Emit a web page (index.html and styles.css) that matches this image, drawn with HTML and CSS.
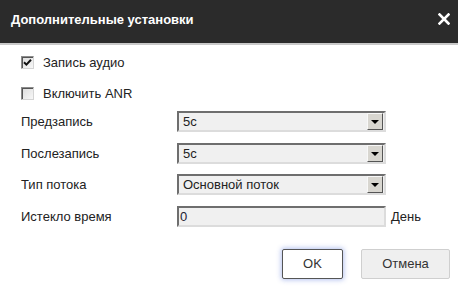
FILE: index.html
```html
<!DOCTYPE html>
<html lang="ru">
<head>
    <meta charset="UTF-8">
    <title>Дополнительные установки</title>
    <link rel="stylesheet" href="styles.css">
</head>
<body>
    <div class="dialog">
        <div class="dialog-header">
            <span class="dialog-title">Дополнительные установки</span>
            <span class="close">
                <svg width="12" height="12" viewBox="0 0 12 12">
                    <path d="M1.5 1.5 L10.5 10.5 M10.5 1.5 L1.5 10.5" stroke="#fff" stroke-width="2.6" stroke-linecap="square"/>
                </svg>
            </span>
        </div>

        <div class="dialog-body">
            <div class="checks">
                <label class="check-row">
                    <span class="check">
                        <svg width="9" height="9" viewBox="0 0 9 9">
                            <path d="M1 4.2 L3.4 6.6 L8 1.8" fill="none" stroke="#111" stroke-width="2"/>
                        </svg>
                    </span>
                    Запись аудио
                </label>
                <label class="check-row">
                    <span class="check"></span>
                    Включить ANR
                </label>
            </div>

            <div class="fields">
                <span class="field-label">Предзапись</span>
                <div class="select"><span class="select-value">5с</span><span class="select-arrow"></span></div>

                <span class="field-label">Послезапись</span>
                <div class="select"><span class="select-value">5с</span><span class="select-arrow"></span></div>

                <span class="field-label">Тип потока</span>
                <div class="select"><span class="select-value">Основной поток</span><span class="select-arrow"></span></div>

                <span class="field-label">Истекло время</span>
                <div class="input-row">
                    <div class="text-input">0</div>
                    <span class="unit">День</span>
                </div>
            </div>
        </div>

        <div class="dialog-footer">
            <button class="btn btn-primary">OK</button>
            <button class="btn">Отмена</button>
        </div>
    </div>
</body>
</html>
```

FILE: styles.css
```css
body {
    margin: 0;
    padding: 0;
    background: #fff;
    font-family: "Liberation Sans", Arial, sans-serif;
    font-size: 13px;
    color: #333;
}

.dialog {
    width: 458px;
    height: 289px;
    display: flex;
    flex-direction: column;
}

.dialog-header {
    height: 43px;
    background: #2b2b2b;
    border-bottom: 2px solid #c9c9c9;
    display: flex;
    align-items: center;
    justify-content: space-between;
    padding: 0 8px 0 11px;
    box-sizing: content-box;
}

.dialog-title {
    color: #fff;
    font-weight: bold;
    font-size: 13px;
    margin-top: -4px;
}

.close {
    display: flex;
    margin-top: -5px;
}

.dialog-body {
    padding: 7px 0 0 21px;
}

.checks {
    display: flex;
    flex-direction: column;
    gap: 10px;
}

.check-row {
    height: 21px;
    display: flex;
    align-items: center;
    gap: 9px;
    color: #222;
}

.check {
    width: 11px;
    height: 11px;
    border: 1px solid #8c8c8c;
    border-right-color: #d4d4d4;
    border-bottom-color: #d4d4d4;
    background: linear-gradient(135deg, #dcdcdc, #f7f7f7);
    box-shadow: inset 1px 1px 0 #555;
    display: flex;
    align-items: center;
    justify-content: center;
}

.fields {
    margin-top: 7px;
    display: grid;
    grid-template-columns: 156px 1fr;
    row-gap: 10.5px;
    align-items: center;
}

.field-label {
    color: #222;
}

.select, .text-input {
    width: 209px;
    height: 21px;
    box-sizing: border-box;
    border: 2px solid;
    border-color: #6e6e6e #dcdcdc #dcdcdc #6e6e6e;
    background: #f0f0f0;
    display: flex;
    align-items: center;
}

.select-value {
    flex: 1;
    padding-left: 4px;
    color: #222;
}

.select-arrow {
    width: 14px;
    height: 15px;
    margin-right: 1px;
    border: 1px solid;
    border-color: #f8f8f8 #555 #555 #f8f8f8;
    background: #d8d6d0;
    display: flex;
    align-items: center;
    justify-content: center;
}

.select-arrow::after {
    content: "";
    border-left: 4px solid transparent;
    border-right: 4px solid transparent;
    border-top: 4px solid #000;
    margin-top: 1px;
}

.input-row {
    display: flex;
    align-items: center;
    gap: 5px;
}

.text-input {
    padding-left: 1px;
    color: #223;
}

.unit {
    color: #222;
}

.dialog-footer {
    margin-top: 22px;
    display: flex;
    justify-content: flex-end;
    gap: 18px;
    padding-right: 8px;
}

.btn {
    height: 30px;
    width: 89px;
    font-family: "Liberation Sans", Arial, sans-serif;
    font-size: 13px;
    color: #333;
    background: #efefef;
    border: 1px solid #cfcfcf;
    border-radius: 2px;
}

.btn-primary {
    width: 61px;
    background: #fff;
    border-color: #555;
    box-shadow: 0 0 5px 1px rgba(90, 120, 220, 0.45);
}
```
